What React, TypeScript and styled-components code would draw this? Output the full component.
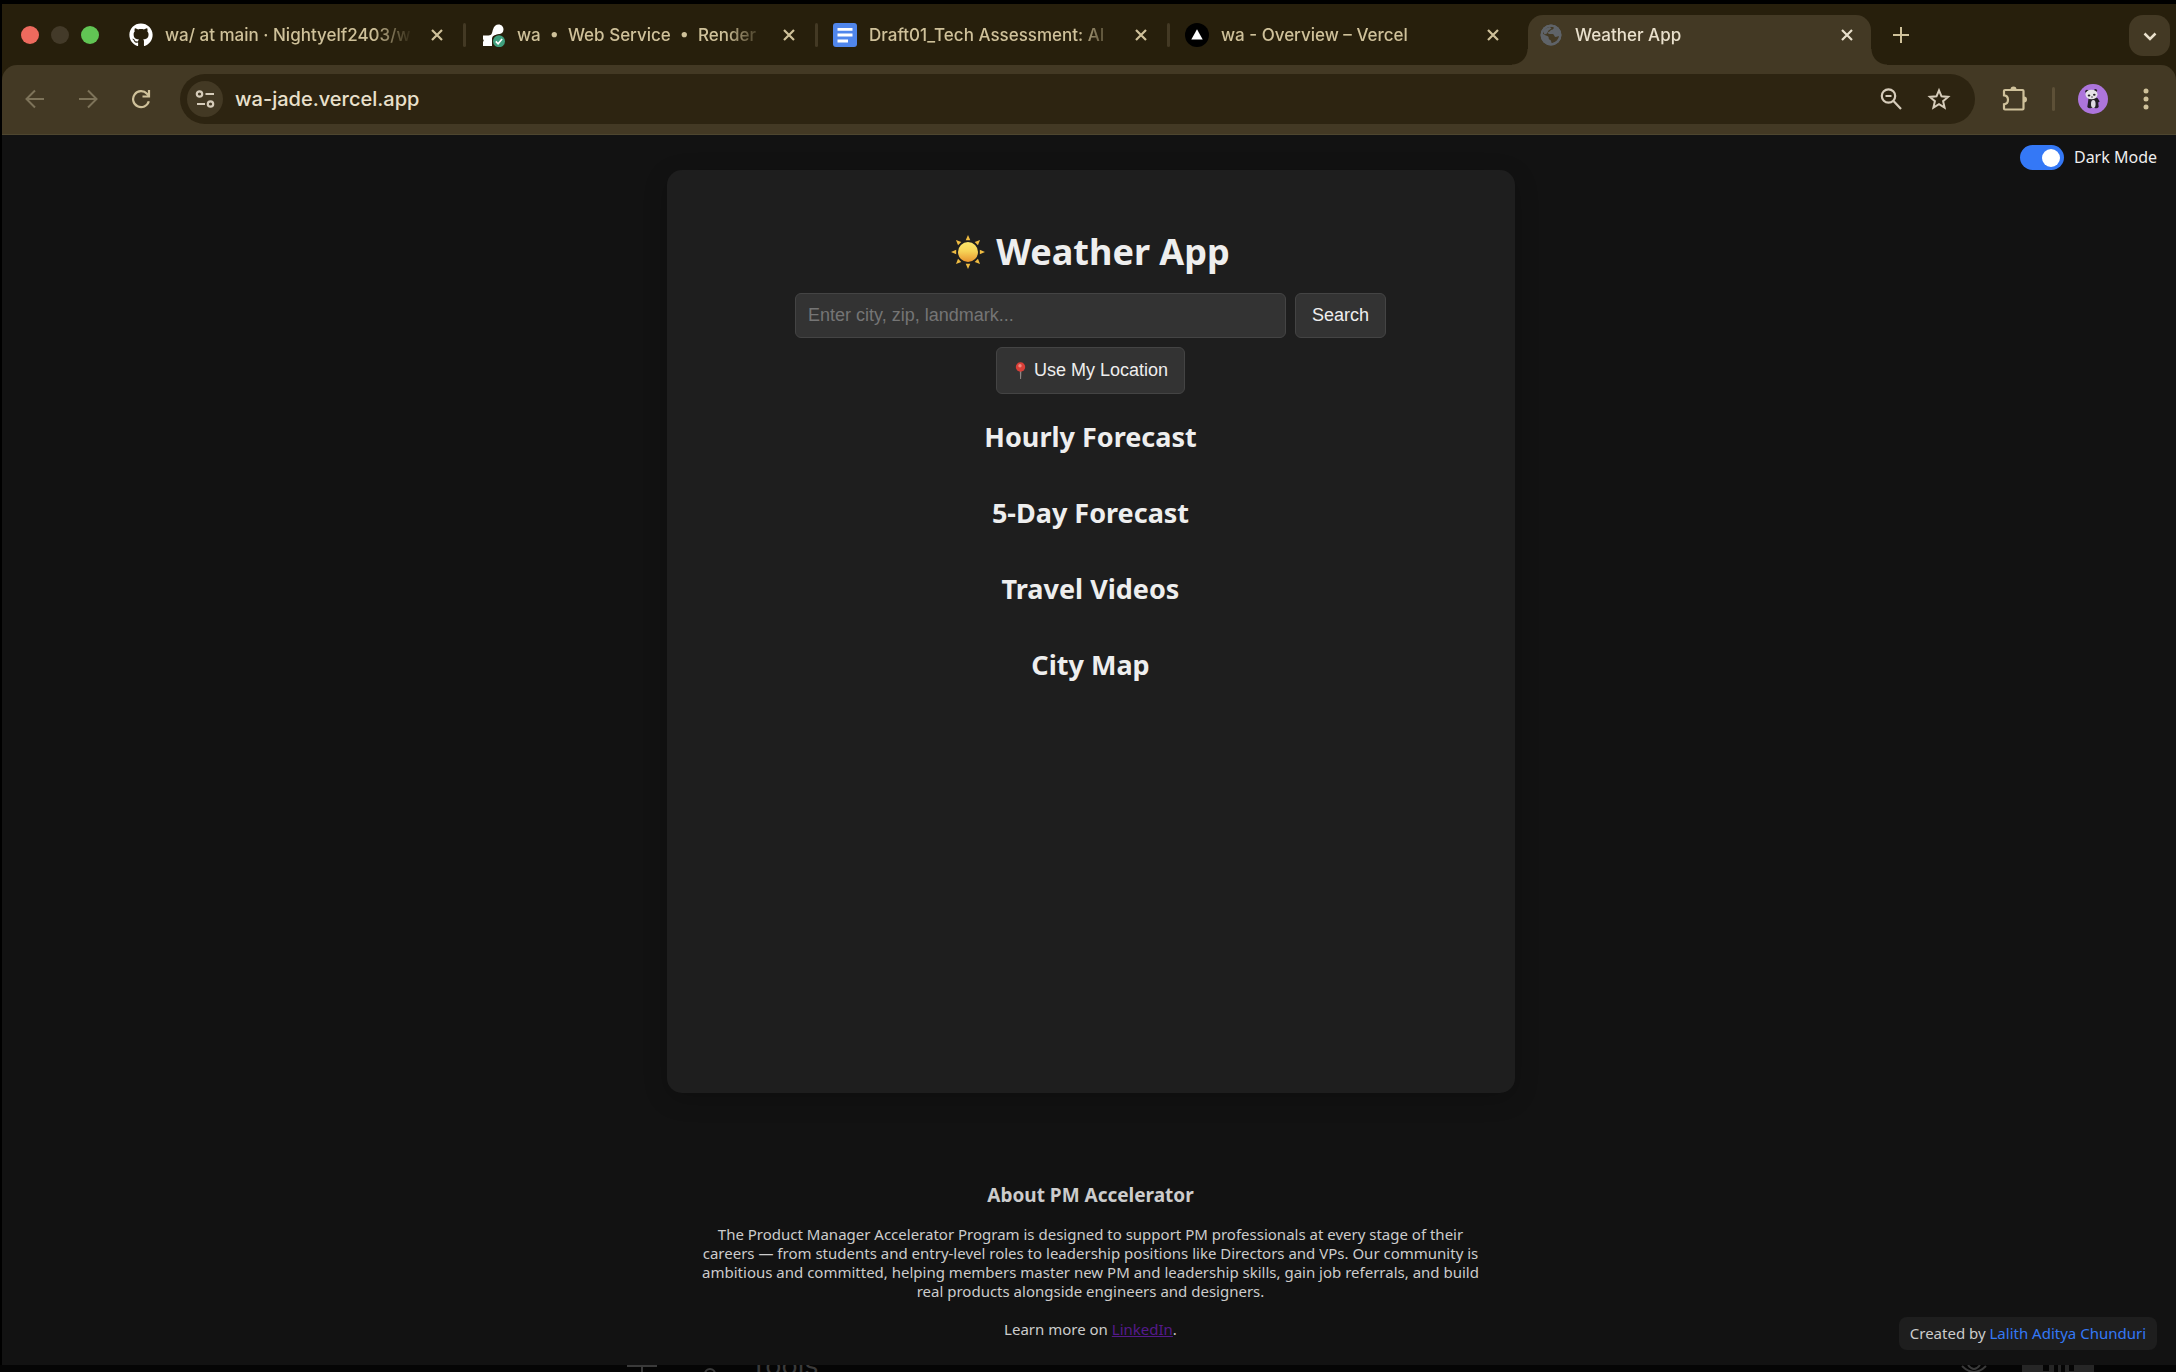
import React, { useState } from "react";
import styled, { createGlobalStyle } from "styled-components";
import { FaGithub } from "react-icons/fa";

const chromeFont = `Inter, "Liberation Sans", sans-serif`;
const pageFont = `"Noto Sans", "Open Sans", sans-serif`;
const controlFont = `"Liberation Sans", Arial, sans-serif`;

const GlobalStyle = createGlobalStyle`
  *, *::before, *::after { box-sizing: border-box; }
  body { margin: 0; background: #000; }
  button { border: 0; padding: 0; background: none; color: inherit; cursor: pointer; }
`;

const Desktop = styled.div`
  min-height: 100vh;
  display: flex;
  flex-direction: column;
  padding-top: 4px;
  background: #000;
`;

const BrowserWindow = styled.div`
  flex: 1;
  display: flex;
  flex-direction: column;
  margin-left: 2px;
  background: #271f0c;
`;

const TabStrip = styled.div`
  display: flex;
  align-items: stretch;
  height: 61px;
  padding: 0 6px 0 19px;
  color: #cfc19a;
`;

const WindowButtons = styled.div`
  display: flex;
  align-items: center;
  gap: 12px;
  width: 93px;
  flex: none;
`;

const WindowButton = styled.button<{ $color: string }>`
  width: 18px;
  height: 18px;
  border-radius: 50%;
  background: ${(p) => p.$color};
`;

const TabItem = styled.div<{ $active?: boolean }>`
  flex: 0 1 ${(p) => (p.$active ? 343 : 352)}px;
  min-width: 0;
  display: grid;
  grid-template-columns: 24px 1fr 24px;
  column-gap: 12px;
  align-items: center;
  position: relative;
  margin: ${(p) => (p.$active ? "11px 3px 0 6px" : "0")};
  padding: ${(p) => (p.$active ? "0 12px 11px 11px" : "0 17px 0 15px")};
  color: ${(p) => (p.$active ? "#e9e0cc" : "inherit")};
  background: ${(p) => (p.$active ? "#433924" : "transparent")};
  border-radius: 15px 15px 0 0;

  &::before,
  &::after {
    content: ${(p) => (p.$active ? '""' : "none")};
    position: absolute;
    bottom: 0;
    width: 16px;
    height: 16px;
  }
  &::before {
    right: 100%;
    background: radial-gradient(circle at 0 0, transparent 15px, #433924 16px);
  }
  &::after {
    left: 100%;
    background: radial-gradient(circle at 100% 0, transparent 15px, #433924 16px);
  }
`;

const TabDivider = styled.span`
  flex: none;
  align-self: center;
  width: 3px;
  height: 24px;
  margin: 0 0 0 -3px;
  border-radius: 2px;
  background: #433924;
`;

const TabTitle = styled.button`
  overflow: hidden;
  height: 28px;
  text-align: left;
  white-space: pre;
  color: inherit;
  font: 500 17px/28px ${chromeFont};
  mask-image: linear-gradient(to right, #000 calc(100% - 40px), transparent);
`;

const IconButton = styled.button<{ $size?: number }>`
  display: flex;
  flex: none;
  align-items: center;
  justify-content: center;
  width: ${(p) => p.$size ?? 24}px;
  height: ${(p) => p.$size ?? 24}px;
`;

const NewTabButton = styled(IconButton)`
  align-self: center;
  margin-left: 9px;
`;

const TabSearchButton = styled(IconButton)`
  margin: 11px 0 0 auto;
  border-radius: 14px;
  background: #433924;
  color: #e9e0cc;
`;

const Toolbar = styled.div`
  display: flex;
  align-items: center;
  height: 70px;
  padding: 0 15px 1px 18px;
  gap: 23px;
  border-radius: 15px 15px 0 0;
  border-bottom: 1px solid #4e462f;
  background: #433924;
  color: #cfc19a;
`;

const NavButton = styled(IconButton)`
  &:disabled { color: #7d7359; }
`;

const AddressBar = styled.div`
  flex: 1;
  display: flex;
  align-items: center;
  height: 50px;
  margin: 0 4px 0 1px;
  padding: 0 24px 0 7px;
  border-radius: 25px;
  background: #2d2411;
  color: #d6ccba;
`;

const SiteInfo = styled(IconButton)`
  border-radius: 50%;
  background: #433924;
`;

const AddressInput = styled.input`
  flex: 1;
  min-width: 0;
  padding: 0;
  margin-left: 12px;
  border: 0;
  outline: 0;
  background: none;
  color: #e9e0cc;
  font: 500 20px/28px ${chromeFont};
`;

const AddressActions = styled.div`
  display: flex;
  gap: 24px;
`;

const ToolbarDivider = styled.span`
  width: 3px;
  height: 24px;
  margin-left: 1px;
  border-radius: 2px;
  background: #5d5037;
`;

const Page = styled.main`
  flex: 1;
  display: flex;
  flex-direction: column;
  align-items: center;
  position: relative;
  padding: 35px 18px 7px 21px;
  background: #121212;
  color: #eee;
  font: 400 15px/19px ${pageFont};
`;

const ThemeSwitch = styled.label`
  position: absolute;
  top: 10px;
  right: 19px;
  display: flex;
  align-items: center;
  gap: 10px;
  font-size: 16px;
  line-height: 25px;
`;

const SwitchInput = styled.input`
  appearance: none;
  display: flex;
  align-items: center;
  width: 44px;
  height: 25px;
  margin: 0;
  padding: 0 4px;
  border-radius: 13px;
  background: #777;

  &::before {
    content: "";
    width: 18px;
    height: 18px;
    border-radius: 50%;
    background: #fff;
  }
  &:checked {
    justify-content: flex-end;
    background: #3478f6;
  }
`;

const Card = styled.section`
  flex: 1;
  display: flex;
  flex-direction: column;
  align-items: center;
  width: 100%;
  max-width: 848px;
  padding: 57px 32px 32px;
  border-radius: 15px;
  background: #1e1e1e;
  box-shadow: 0 6px 24px rgba(0, 0, 0, 0.2);
`;

const AppTitle = styled.h1`
  display: flex;
  align-items: center;
  gap: 11px;
  margin: 0 0 16px;
  font-size: 36px;
  line-height: 50px;
`;

const SearchForm = styled.form`
  display: flex;
  gap: 9px;
  width: 100%;
  max-width: 591px;
`;

const SearchInput = styled.input`
  flex: 1;
  min-width: 0;
  height: 45px;
  padding: 0 12px;
  border: 1px solid #444;
  border-radius: 6px;
  background: #333;
  color: #eee;
  font: 400 18px/21px ${controlFont};
  &::placeholder { color: #757575; opacity: 1; }
`;

const ActionButton = styled.button<{ $height: number }>`
  display: flex;
  align-items: center;
  gap: 6px;
  height: ${(p) => p.$height}px;
  padding: 0 16px;
  border: 1px solid #444;
  border-radius: 6px;
  background: #333;
  color: #eee;
  font: 400 18px/21px ${controlFont};
`;

const LocationRow = styled.div`
  margin: 9px 0 26px;
`;

const SectionList = styled.div`
  display: grid;
  gap: 42px;
  text-align: center;
`;

const SectionTitle = styled.h2`
  margin: 0;
  font-size: 27px;
  line-height: 34px;
`;

const Footer = styled.footer`
  width: 100%;
  max-width: 800px;
  padding-top: 91px;
  text-align: center;
  color: #ccc;
`;

const FooterTitle = styled.h3`
  margin: 0 0 18px;
  font-size: 19px;
  line-height: 23px;
`;

const FooterText = styled.p`
  margin: 0 0 19px;
  a { color: #551a8b; }
`;

const Credit = styled.p`
  position: absolute;
  right: 19px;
  bottom: 15px;
  margin: 0;
  padding: 6px 11px;
  border-radius: 8px;
  background: #1e1e1e;
  color: #ccc;
  line-height: 21px;
  a { color: #3478f6; text-decoration: none; }
`;

const DesktopEdge = styled.div`
  display: flex;
  justify-content: space-between;
  height: 7px;
  overflow: hidden;
  padding: 0 82px 0 627px;
  background: #050505;
  color: #3a3a3a;
  font: 400 27px/20px ${chromeFont};
`;

const EdgeGroup = styled.div`
  display: flex;
  gap: 27px;
  height: 20px;
`;

const EdgeLabel = styled.span`
  margin-top: -9px;
`;

const CloseIcon = () => (
  <svg width="12" height="12" viewBox="0 0 12 12" fill="none" stroke="currentColor" strokeWidth="2.2">
    <path d="M1 1l10 10M11 1L1 11" />
  </svg>
);

const RenderIcon = () => (
  <svg width="24" height="24" viewBox="0 0 24 24">
    <path d="M2 12.5h5.500c3.500 0 3.500-3 4.500-6 1-3.500 3-5 5.500-5 3 0 5 2.200 5 5 0 3-2.200 4.500-4.800 4.800-3 .4-6.700 1-6.700 5v6.700H2v-4q1.500-1.500 0-3z" fill="#fff" />
    <circle cx="18" cy="18.2" r="7" fill="#271f0c" />
    <circle cx="18" cy="18.2" r="6" fill="#3f9f7d" />
    <path d="M14.800 18.4l2.300 2.400 4-4.800" fill="none" stroke="#fff" strokeWidth="1.6" />
  </svg>
);

const DocsIcon = () => (
  <svg width="24" height="24" viewBox="0 0 24 24">
    <rect width="24" height="24" rx="3" fill="#5086ec" />
    <path d="M4.500 6.300h15M4.500 12h15M4.500 18h10.500" stroke="#fff" strokeWidth="2.8" />
  </svg>
);

const VercelIcon = () => (
  <svg width="24" height="24" viewBox="0 0 24 24">
    <circle cx="12" cy="12" r="12" fill="#000" />
    <path d="M12 6.200l5.700 10.300H6.300z" fill="#fff" />
  </svg>
);

const GlobeIcon = () => (
  <svg width="24" height="24" viewBox="0 0 24 24">
    <circle cx="12" cy="12" r="10.5" fill="#5f6368" />
    <path
      d="M14.500 4c.8 1.200-.3 2.500-1.800 2.800-1.500.2-1.300 1.700-2.700 2-1.200.2-1.400 1.300-.4 1.900 1.300.6 3.900-.3 5 .9 1 1.100.5 2.200 1.900 2.400 1.300.1 2.300-.7 3.700-.7-.5 2.900-3.200 6.300-7.300 6.900-1-.7-.4-2-1.200-2.900-.9-.9-2.100-.6-2-2.300.1-1.500-1-2-2.100-2.300-1.700-.4-2.900-1.400-4-2.500.3-3.900 3.700-7.700 10.900-6.200z"
      fill="#433924"
    />
    <circle cx="12" cy="12" r="9.3" fill="none" stroke="#5f6368" strokeWidth="2.2" />
    <path d="M4 8.500c1.500-2.500 4-4 7-4.500l1.500 1.500-3 2-1.500 3-2.500 1z" fill="#5f6368" />
  </svg>
);

const PlusIcon = () => (
  <svg width="16" height="16" viewBox="0 0 16 16" fill="none" stroke="currentColor" strokeWidth="2">
    <path d="M8 0v16M0 8h16" />
  </svg>
);

const ChevronIcon = () => (
  <svg width="14" height="14" viewBox="0 0 14 14" fill="none" stroke="currentColor" strokeWidth="2.5">
    <path d="M1.500 4.500L7 10l5.500-5.500" />
  </svg>
);

const ArrowIcon = ({ forward }: { forward?: boolean }) => (
  <svg width="20" height="20" viewBox="0 0 20 20" fill="none" stroke="currentColor" strokeWidth="2">
    <path d={forward ? "M1 10h17M10 1.500l8.500 8.500-8.500 8.500" : "M19 10H2M10 1.500L1.500 10l8.500 8.500"} />
  </svg>
);

const ReloadIcon = () => (
  <svg width="20" height="20" viewBox="0 0 20 20" fill="none" stroke="currentColor" strokeWidth="2.2">
    <path d="M17.800 12.300A8 8 0 1 1 16 4.700l2 2.300" />
    <path d="M18 1v6.500h-6.500" />
  </svg>
);

const TuneIcon = () => (
  <svg width="20" height="20" viewBox="0 0 20 20" fill="none" stroke="currentColor" strokeWidth="2.2">
    <circle cx="4.5" cy="5" r="2.7" />
    <path d="M10.500 5H19M2 15h8" />
    <circle cx="15.5" cy="15" r="2.7" />
  </svg>
);

const ZoomOutIcon = () => (
  <svg width="24" height="24" viewBox="0 0 24 24" fill="none" stroke="currentColor" strokeWidth="2.2">
    <circle cx="9.5" cy="9" r="6.7" />
    <path d="M14.500 14l7.500 8M6.500 9h6" />
  </svg>
);

const StarIcon = () => (
  <svg width="24" height="24" viewBox="0 0 24 24" fill="none" stroke="currentColor" strokeWidth="2">
    <path d="M12 3.300l2.500 6 6.600.6-5 4.300 1.500 6.500-5.600-3.500-5.600 3.500 1.500-6.500-5-4.300 6.600-.6z" />
  </svg>
);

const PuzzleIcon = () => (
  <svg width="26" height="26" viewBox="0 0 26 26">
    <path
      d="M3 4h17.500q1 0 1 1v17.500q0 1-1 1H3q-1 0-1-1v-4.200c5.300-.6 5.300-8.500 0-9V5q0-1 1-1z"
      fill="none"
      stroke="currentColor"
      strokeWidth="2.2"
    />
    <path d="M8.500 3.500a3 3 0 0 1 6 0zM22 10.500a3 3 0 0 1 0 6z" fill="currentColor" />
  </svg>
);

const PandaAvatar = () => (
  <svg width="30" height="30" viewBox="0 0 30 30">
    <circle cx="15" cy="15" r="15" fill="#ad75dc" />
    <path d="M10.500 14q4.500-1.500 9 0l2.200 3.500-1.500 1 .5 4.500q-1.500 2-4 1h-3.400q-2.500 1-4-1l.8-5.500z" fill="#241f27" />
    <ellipse cx="15.3" cy="20" rx="2.3" ry="4" fill="#dedbe2" />
    <circle cx="9" cy="7.5" r="1.8" fill="#241f27" />
    <circle cx="17.5" cy="6.5" r="1.6" fill="#241f27" />
    <ellipse cx="13.5" cy="10.5" rx="6" ry="4.8" fill="#e6e3e8" />
    <ellipse cx="11" cy="11.6" rx="1.3" ry="1" fill="#241f27" />
    <ellipse cx="16.3" cy="10.8" rx="1.3" ry="1" fill="#241f27" />
    <circle cx="14" cy="13" r=".7" fill="#241f27" />
  </svg>
);

const MenuIcon = () => (
  <svg width="6" height="22" viewBox="0 0 6 22" fill="currentColor">
    <circle cx="3" cy="3" r="2.5" />
    <circle cx="3" cy="11" r="2.5" />
    <circle cx="3" cy="19" r="2.5" />
  </svg>
);

const SunIcon = () => (
  <svg width="34" height="34" viewBox="0 0 34 34" aria-hidden="true">
    <defs>
      <linearGradient id="sun" x1="0" y1="0" x2="0" y2="1">
        <stop offset="0" stopColor="#fbe66b" />
        <stop offset=".45" stopColor="#f7d457" />
        <stop offset="1" stopColor="#e8952f" />
      </linearGradient>
    </defs>
    {[0, 45, 90, 135, 180, 225, 270, 315].map((angle) => (
      <path key={angle} d="M17 0l2.300 5.200h-4.600z" fill="#eebb42" transform={`rotate(${angle} 17 17)`} />
    ))}
    <circle cx="17" cy="17" r="10" fill="url(#sun)" />
  </svg>
);

const PinIcon = () => (
  <svg width="15" height="18" viewBox="0 0 15 18" aria-hidden="true">
    <path d="M6.800 8h1.600l-.3 9h-1z" fill="#8e8583" />
    <circle cx="7.5" cy="5" r="4.7" fill="#d93f38" />
    <circle cx="7" cy="3.8" r="1.7" fill="#f08a7e" />
  </svg>
);

type TabData = { title: string; icon: React.ReactNode };

const tabs: TabData[] = [
  { title: "wa/ at main · Nightyelf2403/w", icon: <FaGithub size={24} color="#fff" /> },
  { title: "wa  •  Web Service  •  Render", icon: <RenderIcon /> },
  { title: "Draft01_Tech Assessment: AI", icon: <DocsIcon /> },
  { title: "wa - Overview – Vercel", icon: <VercelIcon /> },
  { title: "Weather App", icon: <GlobeIcon /> },
];

const sections = ["Hourly Forecast", "5-Day Forecast", "Travel Videos", "City Map"];

export default function App() {
  const [dark, setDark] = useState(true);
  const [query, setQuery] = useState("");

  return (
    <>
      <GlobalStyle />
      <Desktop>
        <BrowserWindow>
          <TabStrip>
            <WindowButtons>
              <WindowButton $color="#ed6a5e" aria-label="Close window" />
              <WindowButton $color="#433a29" aria-label="Minimise window" />
              <WindowButton $color="#61c554" aria-label="Full screen" />
            </WindowButtons>
            {tabs.map((tab, i) => {
              const active = i === tabs.length - 1;
              return (
                <React.Fragment key={tab.title}>
                  <TabItem $active={active}>
                    {tab.icon}
                    <TabTitle>{tab.title}</TabTitle>
                    <IconButton aria-label={`Close ${tab.title}`}>
                      <CloseIcon />
                    </IconButton>
                  </TabItem>
                  {i < tabs.length - 2 && <TabDivider />}
                </React.Fragment>
              );
            })}
            <NewTabButton $size={36} aria-label="New tab">
              <PlusIcon />
            </NewTabButton>
            <TabSearchButton $size={41} aria-label="Search tabs">
              <ChevronIcon />
            </TabSearchButton>
          </TabStrip>

          <Toolbar>
            <NavButton $size={30} disabled aria-label="Back">
              <ArrowIcon />
            </NavButton>
            <NavButton $size={30} disabled aria-label="Forward">
              <ArrowIcon forward />
            </NavButton>
            <NavButton $size={30} aria-label="Reload">
              <ReloadIcon />
            </NavButton>
            <AddressBar>
              <SiteInfo $size={36} aria-label="Site information">
                <TuneIcon />
              </SiteInfo>
              <AddressInput aria-label="Address" defaultValue="wa-jade.vercel.app" />
              <AddressActions>
                <IconButton aria-label="Zoom">
                  <ZoomOutIcon />
                </IconButton>
                <IconButton aria-label="Bookmark this page">
                  <StarIcon />
                </IconButton>
              </AddressActions>
            </AddressBar>
            <IconButton $size={26} aria-label="Extensions">
              <PuzzleIcon />
            </IconButton>
            <ToolbarDivider />
            <IconButton $size={30} aria-label="Profile">
              <PandaAvatar />
            </IconButton>
            <IconButton $size={30} aria-label="Browser menu">
              <MenuIcon />
            </IconButton>
          </Toolbar>

          <Page>
            <ThemeSwitch>
              <SwitchInput
                type="checkbox"
                role="switch"
                checked={dark}
                onChange={(e) => setDark(e.target.checked)}
              />
              Dark Mode
            </ThemeSwitch>

            <Card>
              <AppTitle>
                <SunIcon />
                Weather App
              </AppTitle>
              <SearchForm onSubmit={(e) => e.preventDefault()}>
                <SearchInput
                  aria-label="Location"
                  placeholder="Enter city, zip, landmark..."
                  value={query}
                  onChange={(e) => setQuery(e.target.value)}
                />
                <ActionButton $height={45} type="submit">
                  Search
                </ActionButton>
              </SearchForm>
              <LocationRow>
                <ActionButton $height={47} type="button">
                  <PinIcon />
                  Use My Location
                </ActionButton>
              </LocationRow>
              <SectionList>
                {sections.map((name) => (
                  <SectionTitle key={name}>{name}</SectionTitle>
                ))}
              </SectionList>
            </Card>

            <Footer>
              <FooterTitle>About PM Accelerator</FooterTitle>
              <FooterText>
                The Product Manager Accelerator Program is designed to support PM professionals at every stage of
                their careers — from students and entry-level roles to leadership positions like Directors and VPs.
                Our community is ambitious and committed, helping members master new PM and leadership skills, gain
                job referrals, and build real products alongside engineers and designers.
              </FooterText>
              <FooterText>
                Learn more on <a href="#linkedin">LinkedIn</a>.
              </FooterText>
            </Footer>

            <Credit>
              Created by <a href="#author">Lalith Aditya Chunduri</a>
            </Credit>
          </Page>
        </BrowserWindow>

        <DesktopEdge aria-hidden="true">
          <EdgeGroup>
            <svg width="43" height="20" viewBox="0 0 43 20" fill="none" stroke="currentColor" strokeWidth="2">
              <path d="M0 1h30M15 0v20" />
            </svg>
            <svg width="26" height="20" viewBox="0 0 26 20" fill="none" stroke="currentColor" strokeWidth="2">
              <circle cx="13" cy="9" r="5" />
            </svg>
            <EdgeLabel>Tools</EdgeLabel>
          </EdgeGroup>
          <EdgeGroup>
            <svg width="42" height="20" viewBox="-8 0 42 20" fill="none" stroke="currentColor" strokeWidth="2">
              <path d="M1 1q12 12 24 0M7 0q6 8 12 0" />
            </svg>
            <svg width="72" height="20" viewBox="0 0 72 20">
              <path d="M0 0h72v8H0z" fill="#262626" />
              <path d="M21 0h6v6h-6zM32 0h4v8h-4zM39 0h4v8h-4zM47 0h5v6h-5z" fill="#050505" />
            </svg>
          </EdgeGroup>
        </DesktopEdge>
      </Desktop>
    </>
  );
}
